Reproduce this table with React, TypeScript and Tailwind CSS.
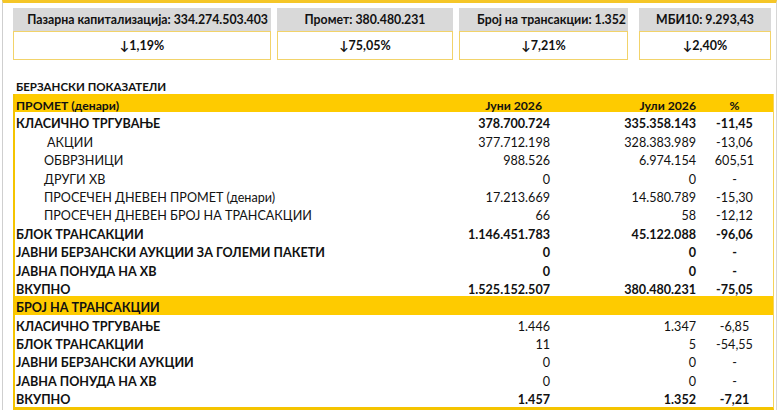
import React from "react";

interface Row {
  label: string;
  jun: string;
  jul: string;
  pct: string;
  bold?: boolean;
  indent?: "sub" | "sub2";
}

const cards = [
  { title: "Пазарна капитализација: 334.274.503.403", change: "1,19%", w: "w-[258px]", mr: "mr-[6px]", align: "justify-end pr-[3px]" },
  { title: "Промет: 380.480.231", change: "75,05%", w: "w-[176px]", mr: "mr-[6px]", align: "justify-center" },
  { title: "Број на трансакции: 1.352", change: "7,21%", w: "w-[169px]", mr: "mr-[11px]", align: "justify-end pr-[2px]" },
  { title: "МБИ10: 9.293,43", change: "2,40%", w: "w-[132px]", mr: "", align: "justify-center" },
];

const turnover: Row[] = [
  { label: "КЛАСИЧНО ТРГУВАЊЕ", jun: "378.700.724", jul: "335.358.143", pct: "-11,45", bold: true },
  { label: "АКЦИИ", jun: "377.712.198", jul: "328.383.989", pct: "-13,06", indent: "sub2" },
  { label: "ОБВРЗНИЦИ", jun: "988.526", jul: "6.974.154", pct: "605,51", indent: "sub" },
  { label: "ДРУГИ ХВ", jun: "0", jul: "0", pct: "-", indent: "sub" },
  { label: "ПРОСЕЧЕН ДНЕВЕН ПРОМЕТ (денари)", jun: "17.213.669", jul: "14.580.789", pct: "-15,30", indent: "sub" },
  { label: "ПРОСЕЧЕН ДНЕВЕН БРОЈ НА ТРАНСАКЦИИ", jun: "66", jul: "58", pct: "-12,12", indent: "sub" },
  { label: "БЛОК ТРАНСАКЦИИ", jun: "1.146.451.783", jul: "45.122.088", pct: "-96,06", bold: true },
  { label: "ЈАВНИ БЕРЗАНСКИ АУКЦИИ ЗА ГОЛЕМИ ПАКЕТИ", jun: "0", jul: "0", pct: "-", bold: true },
  { label: "ЈАВНА ПОНУДА НА ХВ", jun: "0", jul: "0", pct: "-", bold: true },
  { label: "ВКУПНО", jun: "1.525.152.507", jul: "380.480.231", pct: "-75,05", bold: true },
];

const trades: Row[] = [
  { label: "КЛАСИЧНО ТРГУВАЊЕ", jun: "1.446", jul: "1.347", pct: "-6,85" },
  { label: "БЛОК ТРАНСАКЦИИ", jun: "11", jul: "5", pct: "-54,55" },
  { label: "ЈАВНИ БЕРЗАНСКИ АУКЦИИ", jun: "0", jul: "0", pct: "-" },
  { label: "ЈАВНА ПОНУДА НА ХВ", jun: "0", jul: "0", pct: "-" },
  { label: "ВКУПНО", jun: "1.457", jul: "1.352", pct: "-7,21", bold: true },
];

const gridCols = "grid grid-cols-[387px_148px_146px_1fr] items-center h-[18.4px] pt-[3px]";

const DataRow = ({ r, boldLabel }: { r: Row; boldLabel: boolean }) => {
  const pad = r.indent === "sub2" ? "pl-[32px]" : r.indent === "sub" ? "pl-[29px]" : "pl-[1px]";
  const num = r.bold ? "font-bold" : "font-normal";
  return (
    <div className={gridCols}>
      <div className={`${pad} ${boldLabel ? "font-bold" : "font-normal"} whitespace-nowrap`}>{r.label}</div>
      <div className={`text-right ${num}`}>{r.jun}</div>
      <div className={`text-right ${num}`}>{r.jul}</div>
      <div className={`text-center ${num}`}>{r.pct}</div>
    </div>
  );
};

const App = () => {
  return (
    <div className="w-[777px] h-[410px] overflow-hidden bg-white pl-[2px] text-[#111] font-['Lato','Noto_Sans',sans-serif]">
      <div className="h-full border-l border-l-[#cfcfcf] border-r border-r-[#d6d6d6] border-t-[3px] border-t-[#f5c627] pl-[10px] pr-[2px]">
        <div className="flex mt-[5px]">
          {cards.map((c) => (
            <div key={c.title} className={`${c.w} ${c.mr} flex flex-col`}>
              <div className={`h-[23px] pt-[2px] bg-[#d9d9d9] flex items-center ${c.align} text-[12.3px] font-bold whitespace-nowrap`}>{c.title}</div>
              <div className="h-[29px] pt-[2px] border-[1.5px] border-[#f2d36a] bg-white flex items-center justify-center text-[12.5px] font-bold">
                ↓{c.change}
              </div>
            </div>
          ))}
        </div>
        <div className="mt-[19px] pl-[3px] text-[11.5px] font-bold leading-[15px]">БЕРЗАНСКИ ПОКАЗАТЕЛИ</div>
        <div className="border-l-2 border-l-[#f5c400] border-r border-r-[#f5d35a] border-b-[3px] border-b-[#f5c400] text-[12.6px]">
          <div className={`${gridCols} bg-[#fecb00] font-bold text-[12.2px]`}>
            <div className="pl-[1px]">ПРОМЕТ (денари)</div>
            <div className="text-right pr-[8px]">Јуни 2026</div>
            <div className="text-right">Јули 2026</div>
            <div className="text-center">%</div>
          </div>
          {turnover.map((r) => (
            <DataRow key={r.label} r={r} boldLabel={!r.indent} />
          ))}
          <div className={`${gridCols} bg-[#fecb00] font-bold`}>
            <div className="pl-[1px] col-span-4">БРОЈ НА ТРАНСАКЦИИ</div>
          </div>
          {trades.map((r) => (
            <DataRow key={r.label + "t"} r={r} boldLabel={true} />
          ))}
        </div>
      </div>
    </div>
  );
};

export default App;
